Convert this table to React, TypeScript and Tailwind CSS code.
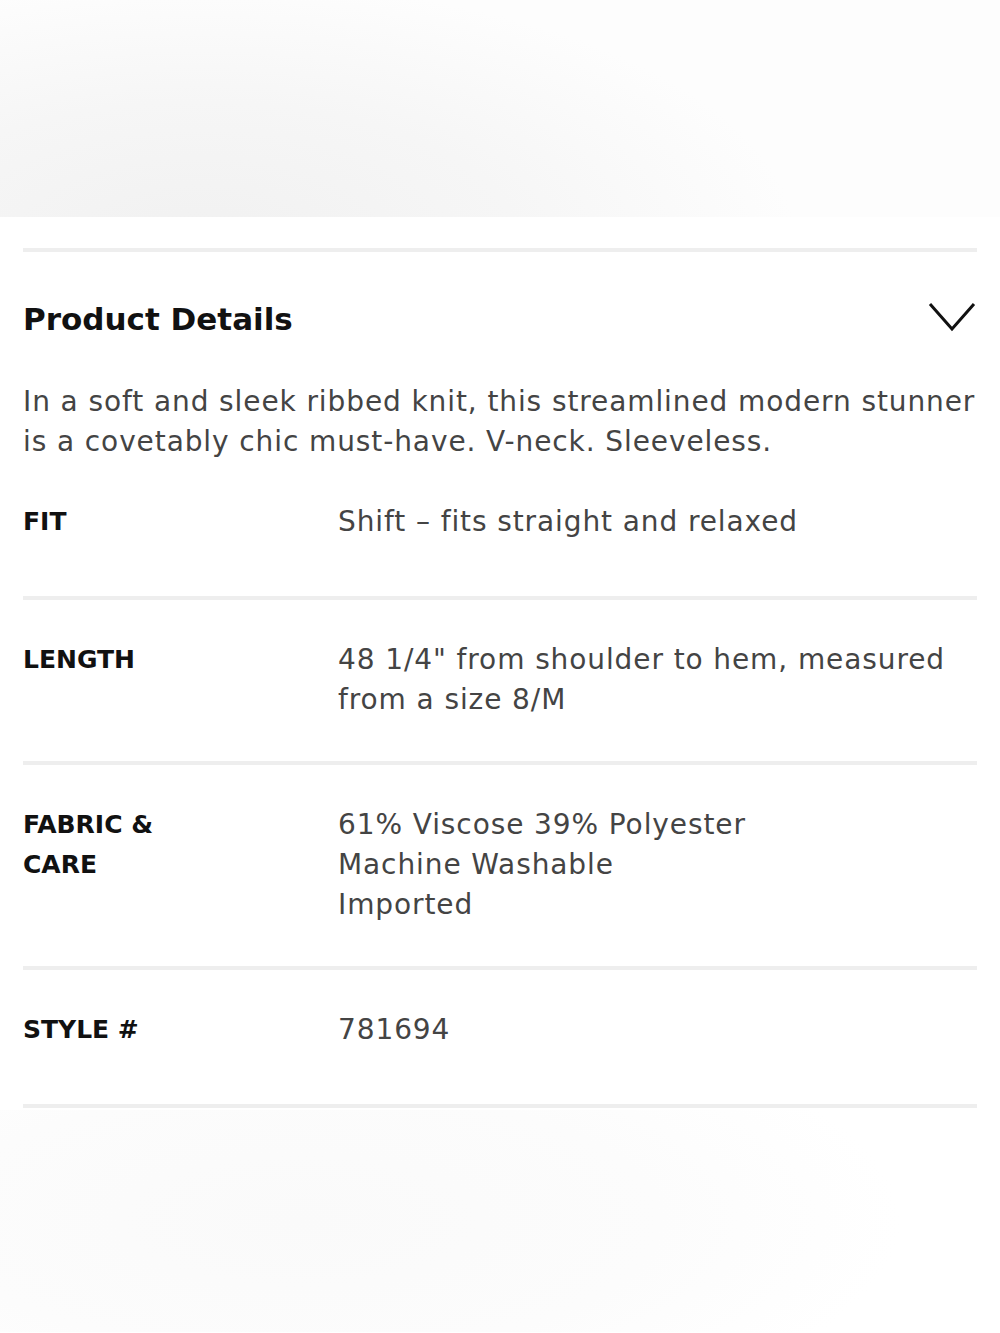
import React from "react";

const font = { fontFamily: '"DejaVu Sans", "Noto Sans", sans-serif' };

function Row({ label, children }: { label: React.ReactNode; children: React.ReactNode }) {
  return (
    <div className="flex min-h-[138px] pt-[40px] pb-[41px] border-b-[4px] border-[#eeeeee]">
      <div className="w-[315px] shrink-0 text-[25px] leading-[40px] font-bold text-[#111111]">{label}</div>
      <div className="flex-1 text-[28px] leading-[40px] tracking-[0.9px] text-[#444444]">{children}</div>
    </div>
  );
}

export default function App() {
  return (
    <div className="w-[1000px] h-[1333px] bg-white overflow-hidden" style={font}>
      <div className="h-[217px] bg-[radial-gradient(ellipse_70%_140%_at_20%_110%,#f1f1f1_0%,#f6f6f6_45%,#fdfdfd_85%)]" />
      <div className="px-[23px]">
        <div className="mt-[31px] h-[4px] bg-[#eeeeee]" />
        <div className="flex items-center justify-between h-[130px]">
          <h2 className="text-[31px] font-bold text-[#111111] leading-[48px] mt-[3px]">Product Details</h2>
          <svg width="48" height="30" viewBox="0 0 48 30" className="mr-[1px]">
            <polyline points="2,2 24,27 46,2" fill="none" stroke="#111" strokeWidth="3" />
          </svg>
        </div>
        <p className="text-[28px] leading-[40px] tracking-[0.9px] text-[#444444]">
          <span className="whitespace-nowrap">In a soft and sleek ribbed knit, this streamlined modern stunner</span>
          <br />
          <span className="whitespace-nowrap">is a covetably chic must-have. V-neck. Sleeveless.</span>
        </p>
        <Row label="FIT">Shift – fits straight and relaxed</Row>
        <Row label="LENGTH">
          48 1/4" from shoulder to hem, measured
          <br />
          from a size 8/M
        </Row>
        <Row label={<>FABRIC &amp;<br />CARE</>}>
          61% Viscose 39% Polyester
          <br />
          Machine Washable
          <br />
          Imported
        </Row>
        <Row label="STYLE #">781694</Row>
      </div>
      <div className="mt-[2px] h-[222px] bg-[radial-gradient(ellipse_60%_100%_at_30%_50%,#fafafa_0%,#fcfcfc_60%,#ffffff_100%)]" />
    </div>
  );
}
